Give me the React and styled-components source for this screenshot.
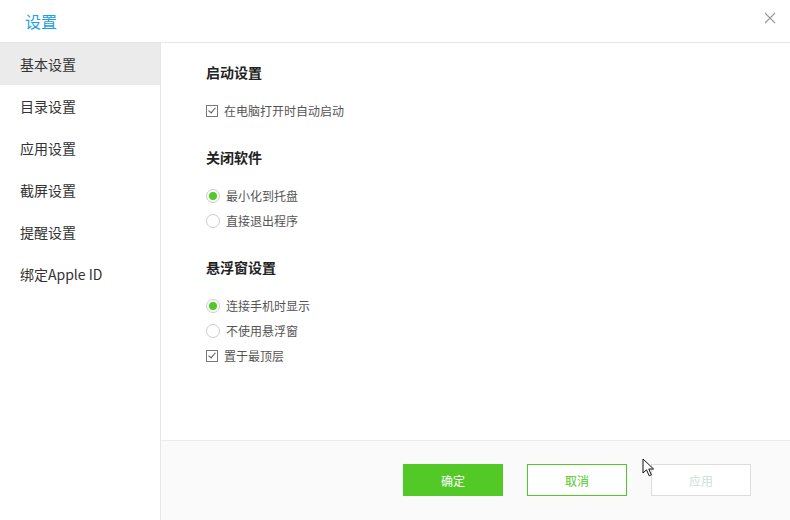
import React, { useState } from "react";
import styled, { createGlobalStyle } from "styled-components";

const GlobalStyle = createGlobalStyle`
    html, body {
        margin: 0;
        padding: 0;
        background: #fff;
    }
    body {
        font-family: "Microsoft YaHei", "Noto Sans CJK SC", "Noto Sans", sans-serif;
        color: #333;
    }
`;

const GREEN = "#52c927";

const menu = ["基本设置", "目录设置", "应用设置", "截屏设置", "提醒设置", "绑定Apple ID"];

const App = () => {
    const [active, setActive] = useState(0);
    const [autoStart, setAutoStart] = useState(true);
    const [closeMode, setCloseMode] = useState("tray");
    const [floatMode, setFloatMode] = useState("phone");
    const [onTop, setOnTop] = useState(true);

    return (
        <>
            <GlobalStyle />
            <Window>
                <Header>
                    <Title>设置</Title>
                    <Close aria-label="close">
                        <svg width="12" height="12" viewBox="0 0 12 12">
                            <path d="M1 1L11 11M11 1L1 11" stroke="#999" strokeWidth="1.1" />
                        </svg>
                    </Close>
                </Header>
                <Body>
                    <Sidebar>
                        {menu.map((m, i) => (
                            <MenuItem key={m} $active={i === active} onClick={() => setActive(i)}>
                                {m}
                            </MenuItem>
                        ))}
                    </Sidebar>
                    <Main>
                        <Content>
                            <Section>
                                <Heading>启动设置</Heading>
                                <Option onClick={() => setAutoStart(!autoStart)}>
                                    <Check $on={autoStart} />
                                    在电脑打开时自动启动
                                </Option>
                            </Section>
                            <Section>
                                <Heading>关闭软件</Heading>
                                <Option onClick={() => setCloseMode("tray")}>
                                    <Radio $on={closeMode === "tray"} />
                                    最小化到托盘
                                </Option>
                                <Option onClick={() => setCloseMode("exit")}>
                                    <Radio $on={closeMode === "exit"} />
                                    直接退出程序
                                </Option>
                            </Section>
                            <Section>
                                <Heading>悬浮窗设置</Heading>
                                <Option onClick={() => setFloatMode("phone")}>
                                    <Radio $on={floatMode === "phone"} />
                                    连接手机时显示
                                </Option>
                                <Option onClick={() => setFloatMode("none")}>
                                    <Radio $on={floatMode === "none"} />
                                    不使用悬浮窗
                                </Option>
                                <Option onClick={() => setOnTop(!onTop)}>
                                    <Check $on={onTop} />
                                    置于最顶层
                                </Option>
                            </Section>
                        </Content>
                        <Footer>
                            <Button $kind="primary">确定</Button>
                            <Button $kind="outline">取消</Button>
                            <Button $kind="disabled" disabled>应用</Button>
                            <Pointer width="14" height="20" viewBox="0 0 14 20">
                                <path
                                    d="M1 1L1 15L4.5 11.8L7.2 17.8L9.4 16.8L6.8 11H11.6Z"
                                    fill="#fff"
                                    stroke="#111"
                                    strokeWidth="1"
                                    strokeLinejoin="round"
                                />
                            </Pointer>
                        </Footer>
                    </Main>
                </Body>
            </Window>
        </>
    );
};

const Window = styled.div`
    width: 790px;
    height: 520px;
    display: flex;
    flex-direction: column;
    background: #fff;
    overflow: hidden;
`;

const Header = styled.div`
    height: 42px;
    flex-shrink: 0;
    display: flex;
    align-items: center;
    justify-content: space-between;
    padding: 0 14px 0 25px;
    border-bottom: 1px solid #e6e6e6;
    box-sizing: content-box;
`;

const Title = styled.h1`
    margin: 0;
    font-size: 16px;
    font-weight: normal;
    color: #1e9fe6;
`;

const Close = styled.button`
    border: none;
    background: none;
    padding: 0;
    margin-top: -7px;
    width: 12px;
    height: 12px;
    display: flex;
    cursor: pointer;
`;

const Body = styled.div`
    flex: 1;
    display: flex;
    min-height: 0;
`;

const Sidebar = styled.div`
    width: 160px;
    flex-shrink: 0;
    border-right: 1px solid #e6e6e6;
    display: flex;
    flex-direction: column;
`;

const MenuItem = styled.div`
    height: 42px;
    line-height: 42px;
    padding-left: 20px;
    font-size: 14px;
    color: #333;
    background: ${(p) => (p.$active ? "#ebebeb" : "transparent")};
    cursor: pointer;
`;

const Main = styled.div`
    flex: 1;
    display: flex;
    flex-direction: column;
`;

const Content = styled.div`
    flex: 1;
    padding: 19px 0 0 45px;
`;

const Section = styled.div`
    margin-bottom: 24px;
    display: flex;
    flex-direction: column;
    align-items: flex-start;
`;

const Heading = styled.h2`
    margin: 0 0 16px;
    height: 20px;
    line-height: 20px;
    font-size: 14px;
    font-weight: bold;
    color: #222;
`;

const Option = styled.label`
    height: 25px;
    display: flex;
    align-items: center;
    gap: 6px;
    font-size: 12px;
    color: #555;
    cursor: pointer;
`;

const Check = styled.span`
    width: 10px;
    height: 10px;
    border: 1px solid #777;
    position: relative;
    flex-shrink: 0;
    &::after {
        content: "";
        display: ${(p) => (p.$on ? "block" : "none")};
        position: absolute;
        left: 3px;
        top: 0px;
        width: 3px;
        height: 6px;
        border: solid #555;
        border-width: 0 1px 1px 0;
        transform: rotate(40deg);
    }
`;

const Radio = styled.span`
    width: 12px;
    height: 12px;
    border-radius: 50%;
    border: 1px solid #ccc;
    background: #fff;
    display: flex;
    align-items: center;
    justify-content: center;
    flex-shrink: 0;
    &::after {
        content: "";
        display: ${(p) => (p.$on ? "block" : "none")};
        width: 8px;
        height: 8px;
        border-radius: 50%;
        background: ${GREEN};
    }
`;

const Footer = styled.div`
    height: 80px;
    flex-shrink: 0;
    border-top: 1px solid #ececec;
    background: #fafafa;
    display: flex;
    justify-content: flex-end;
    align-items: flex-start;
    gap: 24px;
    padding: 23px 39px 0 0;
    box-sizing: border-box;
    position: relative;
`;

const Button = styled.button`
    width: 100px;
    height: 32px;
    font-family: inherit;
    font-size: 12px;
    cursor: pointer;
    border: 1px solid ${(p) => (p.$kind === "disabled" ? "#dcdcdc" : GREEN)};
    background: ${(p) => (p.$kind === "primary" ? GREEN : "#fff")};
    color: ${(p) =>
        p.$kind === "primary" ? "#fff" : p.$kind === "outline" ? GREEN : "#cfe3d5"};
    &:disabled {
        cursor: default;
    }
`;

const Pointer = styled.svg`
    position: absolute;
    left: 481px;
    top: 17px;
    pointer-events: none;
`;

export default App;
